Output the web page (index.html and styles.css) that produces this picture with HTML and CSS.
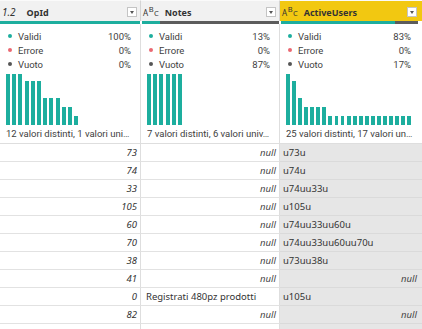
FILE: index.html
```html
<!DOCTYPE html>
<html lang="it">
<head>
<meta charset="utf-8">
<title>Profilo colonne</title>
<link rel="stylesheet" href="styles.css">
</head>
<body>
<div class="table">
  <div class="hdr c1"><span class="type num">1.2</span><span class="name">OpId</span><span class="dd"></span></div>
  <div class="hdr c2"><span class="type abc"><span class="a">A</span><span class="b">B</span><span class="c">C</span></span><span class="name">Notes</span><span class="dd"></span></div>
  <div class="hdr c3 sel"><span class="type abc"><span class="a">A</span><span class="b">B</span><span class="c">C</span></span><span class="name">ActiveUsers</span><span class="dd"></span></div>

  <div class="qb q1"><span class="ok" style="width:100%"></span></div>
  <div class="qb q2"><span class="ok" style="width:13%"></span><span class="empty" style="width:87%"></span></div>
  <div class="qb q3"><span class="ok" style="width:83%"></span><span class="empty" style="width:17%"></span></div>

  <div class="prof c1">
    <div class="stat"><span class="dot ok"></span><span class="lbl">Validi</span><span class="pct">100%</span></div>
    <div class="stat"><span class="dot err"></span><span class="lbl">Errore</span><span class="pct">0%</span></div>
    <div class="stat"><span class="dot emp"></span><span class="lbl">Vuoto</span><span class="pct">0%</span></div>
    <div class="hist">
      <span style="height:51px"></span><span style="height:51px"></span><span style="height:51px"></span>
      <span style="height:44px"></span><span style="height:44px"></span><span style="height:44px"></span>
      <span style="height:27px"></span><span style="height:27px"></span><span style="height:27px"></span>
      <span style="height:18px"></span><span style="height:18px"></span><span style="height:9px"></span>
    </div>
    <div class="foot">12 valori distinti, 1 valori uni…</div>
  </div>
  <div class="prof c2">
    <div class="stat"><span class="dot ok"></span><span class="lbl">Validi</span><span class="pct">13%</span></div>
    <div class="stat"><span class="dot err"></span><span class="lbl">Errore</span><span class="pct">0%</span></div>
    <div class="stat"><span class="dot emp"></span><span class="lbl">Vuoto</span><span class="pct">87%</span></div>
    <div class="hist">
      <span style="height:51px"></span><span style="height:51px"></span><span style="height:51px"></span>
      <span style="height:51px"></span><span style="height:51px"></span><span style="height:51px"></span>
    </div>
    <div class="foot">7 valori distinti, 6 valori univ…</div>
  </div>
  <div class="prof c3">
    <div class="stat"><span class="dot ok"></span><span class="lbl">Validi</span><span class="pct">83%</span></div>
    <div class="stat"><span class="dot err"></span><span class="lbl">Errore</span><span class="pct">0%</span></div>
    <div class="stat"><span class="dot emp"></span><span class="lbl">Vuoto</span><span class="pct">17%</span></div>
    <div class="hist">
      <span style="height:51px"></span><span style="height:44px"></span><span style="height:27px"></span>
      <span style="height:18px"></span><span style="height:18px"></span><span style="height:18px"></span><span style="height:18px"></span>
      <span style="height:9px"></span><span style="height:9px"></span><span style="height:9px"></span><span style="height:9px"></span>
      <span style="height:9px"></span><span style="height:9px"></span><span style="height:9px"></span><span style="height:9px"></span>
      <span style="height:9px"></span><span style="height:9px"></span><span style="height:9px"></span><span style="height:9px"></span>
      <span style="height:9px"></span><span style="height:9px"></span>
    </div>
    <div class="foot">25 valori distinti, 17 valori un…</div>
  </div>

  <div class="cell c1 num">73</div><div class="cell c2 null">null</div><div class="cell c3">u73u</div>
  <div class="cell c1 num">74</div><div class="cell c2 null">null</div><div class="cell c3">u74u</div>
  <div class="cell c1 num">33</div><div class="cell c2 null">null</div><div class="cell c3">u74uu33u</div>
  <div class="cell c1 num">105</div><div class="cell c2 null">null</div><div class="cell c3">u105u</div>
  <div class="cell c1 num">60</div><div class="cell c2 null">null</div><div class="cell c3">u74uu33uu60u</div>
  <div class="cell c1 num">70</div><div class="cell c2 null">null</div><div class="cell c3">u74uu33uu60uu70u</div>
  <div class="cell c1 num">38</div><div class="cell c2 null">null</div><div class="cell c3">u73uu38u</div>
  <div class="cell c1 num">41</div><div class="cell c2 null">null</div><div class="cell c3 null">null</div>
  <div class="cell c1 num">0</div><div class="cell c2">Registrati 480pz prodotti</div><div class="cell c3">u105u</div>
  <div class="cell c1 num">82</div><div class="cell c2 null">null</div><div class="cell c3 null">null</div>
  <div class="cell c1 num"></div><div class="cell c2 null"></div><div class="cell c3"></div>
</div>
</body>
</html>
```

FILE: styles.css
```css
html, body {
  margin: 0;
  padding: 0;
  background: #ffffff;
  overflow: hidden;
}

.table {
  display: grid;
  grid-template-columns: 141px 139px 142px;
  width: 422px;
  font-family: "Noto Sans", "Liberation Sans", sans-serif;
  color: #333333;
}

.table > div {
  box-sizing: border-box;
}

.c1, .c2 {
  border-right: 1px solid #dedede;
}

/* header */
.hdr {
  height: 21px;
  display: flex;
  align-items: center;
  background: #f1f1f1;
  padding: 2px 3px 0 2px;
  border-top: 1px solid #fafafa;
  font-size: 9px;
}

.hdr.c1, .hdr.c2 {
  border-right-color: #d4d4d4;
}

.hdr.sel {
  background: #f2c811;
  padding-right: 5px;
}

.type {
  color: #333333;
  white-space: nowrap;
}

.type.num {
  font-size: 10px;
  margin-right: 11px;
}

.type.abc {
  display: inline-flex;
  align-items: center;
  font-size: 7.5px;
  margin-right: 6px;
  line-height: 1;
}

.type.abc .a {
  font-size: 8px;
  transform: translateY(1px);
}

.type.abc .b {
  transform: translateY(-2px);
  margin-left: 0.5px;
}

.type.abc .c {
  transform: translateY(2px);
  margin-left: 0.5px;
}

.name {
  flex: 1;
  font-weight: 700;
  color: #333333;
  white-space: nowrap;
}

.dd {
  width: 10px;
  height: 10px;
  box-sizing: border-box;
  border: 1px solid #c4c4c4;
  background: #ffffff;
  display: flex;
  align-items: center;
  justify-content: center;
}

.dd::after {
  content: "";
  border-left: 2.5px solid transparent;
  border-right: 2.5px solid transparent;
  border-top: 3px solid #555555;
}

/* quality bars */
.qb {
  height: 3px;
  display: flex;
  padding: 0 1px;
}

.qb.q1 {
  padding: 0 1px 0 0;
}

.qb.q3 {
  padding: 0 4px 0 1px;
}

.qb .ok {
  background: #1dae9e;
}

.qb .empty {
  background: #5c5c5c;
}

/* profile */
.prof {
  height: 120px;
  padding: 5px 9px 0 6px;
  border-bottom: 1px solid #dedede;
  font-family: Roboto, "Noto Sans", sans-serif;
  font-size: 9.5px;
  color: #3e3e3e;
}

.prof.c3 {
  padding-right: 11px;
}

.stat {
  height: 14px;
  display: flex;
  align-items: center;
}

.dot {
  width: 4px;
  height: 4px;
  border-radius: 50%;
  margin: 0 6px 0 2px;
}

.dot.ok { background: #1dae9e; }
.dot.err { background: #ea6872; }
.dot.emp { background: #555555; }

.lbl {
  flex: 1;
}

.hist {
  height: 54px;
  display: flex;
  align-items: flex-end;
  gap: 2.2px;
}

.hist span {
  width: 4px;
  background: #1dae9e;
}

.foot {
  height: 18px;
  line-height: 18px;
  white-space: nowrap;
  overflow: hidden;
  margin-right: -4px;
}

/* data rows */
.cell {
  height: 18px;
  line-height: 17px;
  border-bottom: 1px solid #e2e2e2;
  font-size: 9.5px;
  padding: 0 3px 0 5px;
  white-space: nowrap;
  overflow: hidden;
}

.cell.c1 {
  padding-right: 3px;
}

.cell.c3 {
  background: #e6e6e6;
  padding: 0 5px 0 3px;
  border-bottom-color: #dadada;
}

.num, .null {
  text-align: right;
  font-style: italic;
}

.null {
  color: #444444;
}
```
